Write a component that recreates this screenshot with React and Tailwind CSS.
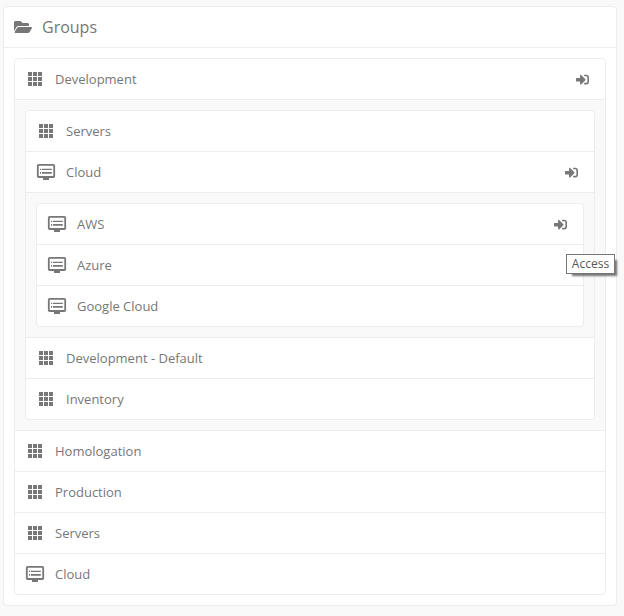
import React from "react";
import { FaFolderOpen, FaSignInAlt } from "react-icons/fa";

const groups = [
  {
    name: "Development",
    icon: "grid",
    access: true,
    children: [
      { name: "Servers", icon: "grid" },
      {
        name: "Cloud",
        icon: "dvr",
        access: true,
        children: [
          { name: "AWS", icon: "dvr", access: true, tooltip: "Access" },
          { name: "Azure", icon: "dvr" },
          { name: "Google Cloud", icon: "dvr" },
        ],
      },
      { name: "Development - Default", icon: "grid" },
      { name: "Inventory", icon: "grid" },
    ],
  },
  { name: "Homologation", icon: "grid" },
  { name: "Production", icon: "grid" },
  { name: "Servers", icon: "grid" },
  { name: "Cloud", icon: "dvr" },
];

function GridIcon() {
  return (
    <svg width="14" height="14" viewBox="0 0 14 14" fill="currentColor" shapeRendering="crispEdges">
      {[0, 5, 10].map((y) =>
        [0, 5, 10].map((x) => <rect key={`${x}-${y}`} x={x} y={y} width="4" height="4" />)
      )}
    </svg>
  );
}

function DvrIcon() {
  return (
    <svg width="20" height="16" viewBox="0 0 20 16" fill="currentColor">
      <path
        fillRule="evenodd"
        d="M2.700 0h14.600a1.800 1.800 0 0 1 1.800 1.800v10.400a1.800 1.800 0 0 1-1.800 1.800H13v2H7v-2H2.700A1.800 1.800 0 0 1 .9 12.200V1.800A1.800 1.800 0 0 1 2.700 0zM2.700 1.700v10.300h14.600V1.700z"
      />
      <path d="M4 4.800h1.200V6H4zM6 4.800h9.800V6H6zM4 8h1.200v1.700H4zM6 8h9.800v1.700H6z" />
    </svg>
  );
}

function Row({ item }) {
  return (
    <div className="relative flex h-10 items-center pl-[10px] pr-4">
      <span className="mr-[10px] flex w-5 justify-center">
        {item.icon === "grid" ? <GridIcon /> : <DvrIcon />}
      </span>
      <span className="flex-1 whitespace-nowrap pt-[2px]">{item.name}</span>
      {item.access && <FaSignInAlt size={13} />}
      {item.tooltip && (
        <span className="absolute left-[529px] top-[50px] flex h-5 w-[49px] items-center justify-center border border-[#767676] bg-white text-xs leading-none text-[#575757] shadow-[4px_4px_2px_-2px_rgba(0,0,0,0.55)]">
          {item.tooltip}
        </span>
      )}
    </div>
  );
}

function GroupList({ items }) {
  return (
    <ul className="divide-y divide-[#ededed] rounded border border-[#ededed] bg-white">
      {items.map((item) => (
        <li key={item.name}>
          <Row item={item} />
          {item.children && (
            <div className="border-t border-[#ededed] bg-[#f9f9f9] p-[10px]">
              <GroupList items={item.children} />
            </div>
          )}
        </li>
      ))}
    </ul>
  );
}

export default function App() {
  return (
    <main className="h-[616px] w-[624px] overflow-hidden bg-[#f9f9f9] pl-[3px] pt-[6px] font-['Open_Sans','Noto_Sans',sans-serif] text-[13px] text-[#777]">
      <section className="w-[614px] rounded border border-[#ededed] bg-white">
        <header className="flex h-[41px] items-center border-b border-[#ededed] pl-[10px]">
          <FaFolderOpen size={18} />
          <h1 className="ml-[10px] text-base">Groups</h1>
        </header>
        <div className="p-[10px]">
          <GroupList items={groups} />
        </div>
      </section>
    </main>
  );
}
